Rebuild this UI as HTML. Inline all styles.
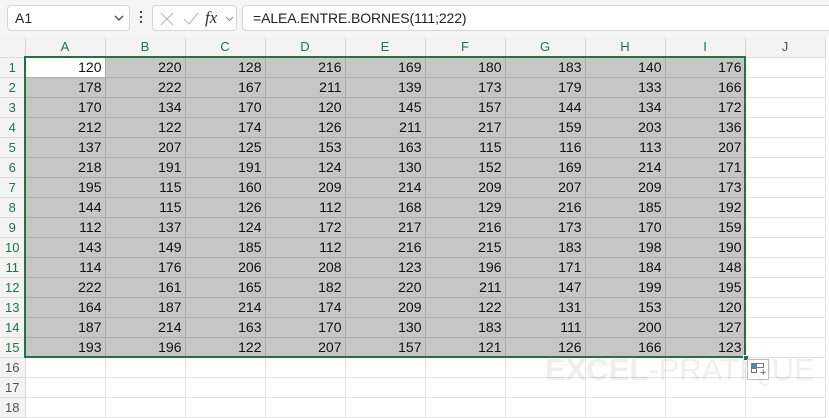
<!DOCTYPE html>
<html><head><meta charset="utf-8"><style>
*{margin:0;padding:0;box-sizing:border-box}
body{width:829px;height:401px;overflow:hidden;background:#fff;font-family:"Liberation Sans",sans-serif;position:relative}
.top{position:absolute;left:0;top:0;width:829px;height:37px;background:#f5f5f5}
.box{position:absolute;top:5px;height:26px;background:#fff;border:1px solid #d6d6d6;border-radius:4px}
table{position:absolute;left:0;top:37px;border-collapse:collapse;table-layout:fixed}
td{height:20px;width:80px;border-right:1px solid #e1e1e1;border-bottom:1px solid #e1e1e1;font-size:14px;text-align:right;padding:0 3px 0 0;color:#111;line-height:19px;white-space:nowrap;overflow:hidden}
td.h{background:#f3f3f3;text-align:center;color:#555;font-size:13px;border-color:#dadada;padding:0}
td.r{width:25px;background:#f3f3f3;text-align:center;color:#555;font-size:13px;border-color:#dadada;padding:0}
td.g{color:#217346}
tr.s td:not(.r){background:#c6c6c6;border-color:#ababab}
tr.s td.n{background:#fff;border-color:#e1e1e1}
td.w{background:#fff !important}
</style></head><body>
<div class="top"></div>
<div class="box" style="left:7px;width:123px"><span style="position:absolute;left:7px;top:4px;font-size:14px;color:#222">A1</span><svg style="position:absolute;left:106px;top:9px" width="10" height="7"><path d="M1 1l4 4 4-4" stroke="#444" fill="none" stroke-width="1.3"/></svg></div>
<div style="position:absolute;left:140px;top:11px;width:2px;height:2px;background:#444;box-shadow:0 5px #444,0 10px #444"></div>
<div class="box" style="left:152px;width:85px"><svg style="position:absolute;left:6px;top:5px" width="16" height="16"><path d="M2 2l12 12M14 2L2 14" stroke="#bbb" stroke-width="1.2"/></svg><svg style="position:absolute;left:30px;top:5px" width="16" height="16"><path d="M1 8l5 5 9-11" stroke="#bbb" fill="none" stroke-width="1.2"/></svg><span style="position:absolute;left:52px;top:2px;font:italic 17px 'Liberation Serif',serif;color:#333">fx</span><svg style="position:absolute;left:72px;top:10px" width="9" height="6"><path d="M1 1l3.5 3.5L8 1" stroke="#888" fill="none"/></svg></div>
<div class="box" style="left:242px;width:595px"><span style="position:absolute;left:10px;top:4px;font-size:14px;color:#222;letter-spacing:-0.1px">=ALEA.ENTRE.BORNES(111;222)</span></div>
<table>
<tr><td class="r" style="height:20px"></td><td class="h g">A</td><td class="h g">B</td><td class="h g">C</td><td class="h g">D</td><td class="h g">E</td><td class="h g">F</td><td class="h g">G</td><td class="h g">H</td><td class="h g">I</td><td class="h">J</td></tr>
<tr class="s"><td class="r g">1</td><td class="w">120</td><td>220</td><td>128</td><td>216</td><td>169</td><td>180</td><td>183</td><td>140</td><td>176</td><td class="n"></td></tr>
<tr class="s"><td class="r g">2</td><td>178</td><td>222</td><td>167</td><td>211</td><td>139</td><td>173</td><td>179</td><td>133</td><td>166</td><td class="n"></td></tr>
<tr class="s"><td class="r g">3</td><td>170</td><td>134</td><td>170</td><td>120</td><td>145</td><td>157</td><td>144</td><td>134</td><td>172</td><td class="n"></td></tr>
<tr class="s"><td class="r g">4</td><td>212</td><td>122</td><td>174</td><td>126</td><td>211</td><td>217</td><td>159</td><td>203</td><td>136</td><td class="n"></td></tr>
<tr class="s"><td class="r g">5</td><td>137</td><td>207</td><td>125</td><td>153</td><td>163</td><td>115</td><td>116</td><td>113</td><td>207</td><td class="n"></td></tr>
<tr class="s"><td class="r g">6</td><td>218</td><td>191</td><td>191</td><td>124</td><td>130</td><td>152</td><td>169</td><td>214</td><td>171</td><td class="n"></td></tr>
<tr class="s"><td class="r g">7</td><td>195</td><td>115</td><td>160</td><td>209</td><td>214</td><td>209</td><td>207</td><td>209</td><td>173</td><td class="n"></td></tr>
<tr class="s"><td class="r g">8</td><td>144</td><td>115</td><td>126</td><td>112</td><td>168</td><td>129</td><td>216</td><td>185</td><td>192</td><td class="n"></td></tr>
<tr class="s"><td class="r g">9</td><td>112</td><td>137</td><td>124</td><td>172</td><td>217</td><td>216</td><td>173</td><td>170</td><td>159</td><td class="n"></td></tr>
<tr class="s"><td class="r g">10</td><td>143</td><td>149</td><td>185</td><td>112</td><td>216</td><td>215</td><td>183</td><td>198</td><td>190</td><td class="n"></td></tr>
<tr class="s"><td class="r g">11</td><td>114</td><td>176</td><td>206</td><td>208</td><td>123</td><td>196</td><td>171</td><td>184</td><td>148</td><td class="n"></td></tr>
<tr class="s"><td class="r g">12</td><td>222</td><td>161</td><td>165</td><td>182</td><td>220</td><td>211</td><td>147</td><td>199</td><td>195</td><td class="n"></td></tr>
<tr class="s"><td class="r g">13</td><td>164</td><td>187</td><td>214</td><td>174</td><td>209</td><td>122</td><td>131</td><td>153</td><td>120</td><td class="n"></td></tr>
<tr class="s"><td class="r g">14</td><td>187</td><td>214</td><td>163</td><td>170</td><td>130</td><td>183</td><td>111</td><td>200</td><td>127</td><td class="n"></td></tr>
<tr class="s"><td class="r g">15</td><td>193</td><td>196</td><td>122</td><td>207</td><td>157</td><td>121</td><td>126</td><td>166</td><td>123</td><td class="n"></td></tr>
<tr><td class="r">16</td><td></td><td></td><td></td><td></td><td></td><td></td><td></td><td></td><td></td><td></td></tr>
<tr><td class="r">17</td><td></td><td></td><td></td><td></td><td></td><td></td><td></td><td></td><td></td><td></td></tr>
<tr><td class="r">18</td><td></td><td></td><td></td><td></td><td></td><td></td><td></td><td></td><td></td><td></td></tr>
</table>
<div style="position:absolute;left:24px;top:56px;width:722px;height:302px;border:2px solid #217346"></div>
<div style="position:absolute;left:743px;top:355px;width:6px;height:6px;background:#217346;border:1px solid #fff"></div>
<div style="position:absolute;left:545px;top:354px;font-size:31px;line-height:31px;color:#000;opacity:0.06;white-space:nowrap;transform:scaleX(1.0);transform-origin:left top"><b>EXCEL</b>-PRATIQUE</div>
<div style="position:absolute;left:747px;top:359px;width:22px;height:21px;border:1px solid #bbb;background:#fff">
<div style="position:absolute;left:3px;top:3px;width:5px;height:5px;background:#4a86c8"></div>
<div style="position:absolute;left:8px;top:3px;width:8px;height:5px;border:1px solid #777"></div>
<div style="position:absolute;left:3px;top:8px;width:6px;height:5px;border:1px solid #777"></div>
<span style="position:absolute;left:12px;top:7px;font-size:11px;color:#555">+</span></div>
</body></html>
